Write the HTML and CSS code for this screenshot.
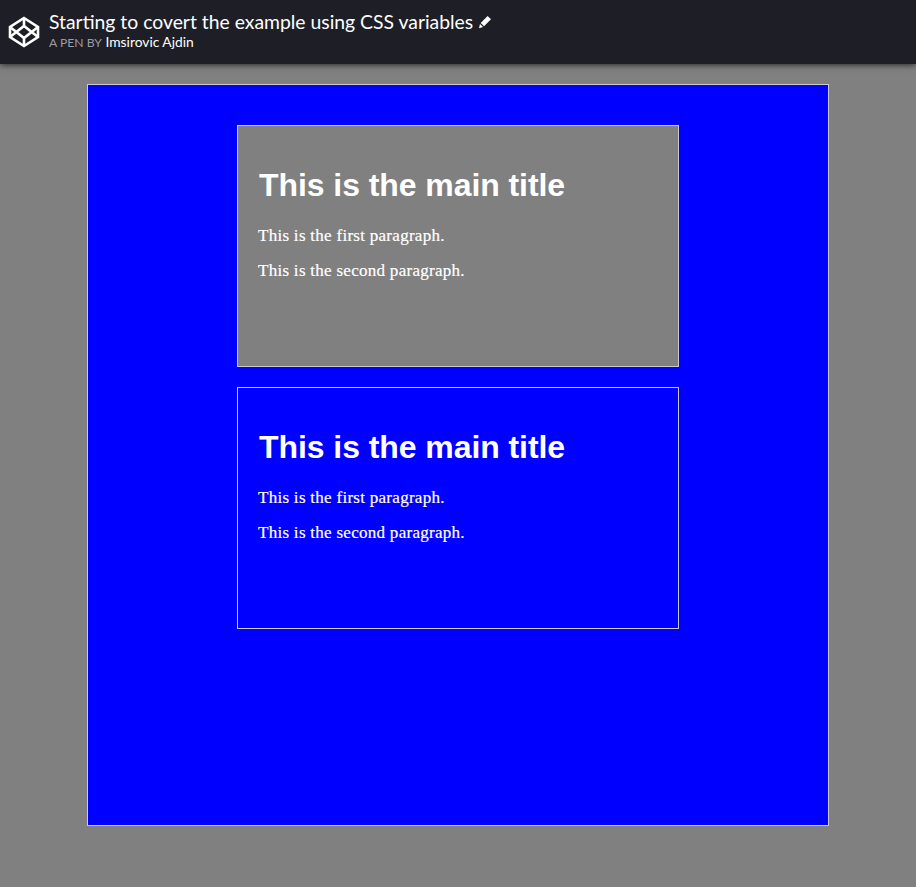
FILE: index.html
```
<!DOCTYPE html>
<html lang="en">
<head>
<meta charset="utf-8">
<title>Starting to covert the example using CSS variables</title>
<link rel="stylesheet" href="styles.css">
</head>
<body>
<header class="topbar">
  <svg class="logo" viewBox="0 0 32 32" width="32" height="32" fill="none" stroke="#fff" stroke-width="2.6" stroke-linejoin="miter">
    <path d="M16 2 30 11V21L16 30 2 21V11Z"/>
    <path d="M16 2V10M16 22V30M2 11 16 22 30 11M2 21 16 10 30 21"/>
  </svg>
  <div class="details">
    <h1 class="pen-title">Starting to covert the example using CSS variables
      <svg class="pencil" viewBox="0 0 14 14" width="14" height="14"><path fill="#fff" d="M9.6 1 13 4.2 6 11.2 2.7 8Z"/><path fill="#fff" d="M2 9 5.1 12 1 13.2Z"/></svg>
    </h1>
    <div class="byline"><span class="by-label">A PEN BY</span> <span class="author">Imsirovic Ajdin</span></div>
  </div>
</header>
<main class="outer">
  <section class="card card-gray">
    <h2 class="title">This is the main title</h2>
    <p class="para">This is the first paragraph.</p>
    <p class="para">This is the second paragraph.</p>
  </section>
  <section class="card card-blue">
    <h2 class="title">This is the main title</h2>
    <p class="para">This is the first paragraph.</p>
    <p class="para">This is the second paragraph.</p>
  </section>
</main>
</body>
</html>
```
FILE: styles.css
```
* { box-sizing: border-box; }
html, body { margin: 0; padding: 0; }
body { background: #808080; height: 887px; overflow: hidden; }
.topbar {
  height: 64px;
  background: #1e1f26;
  box-shadow: 0 1px 6px rgba(0,0,0,.7);
  display: flex;
  align-items: center;
  padding-left: 8px;
  gap: 9px;
  margin-bottom: 20px;
  position: relative;
}
.logo { flex: none; }
.details { font-family: Lato, sans-serif; color: #fff; margin-top: -4px; }
.pen-title { margin: 0; font-size: 19.35px; font-weight: 400; line-height: 24px; white-space: nowrap; }
.pencil { vertical-align: 0; }
.byline { font-size: 13.8px; line-height: 15px; }
.by-label { color: #9a9ca8; font-size: 12.2px; }
.author { color: #fff; }
.outer {
  width: 742px;
  height: 742px;
  margin: 0 auto;
  background: #00f;
  border: 1px solid #ccc;
  padding-top: 40px;
  display: flex;
  flex-direction: column;
  align-items: center;
  gap: 20px;
}
.card {
  width: 442px;
  height: 242px;
  border: 1px solid #ccc;
  color: #fff;
  padding: 41px 20px 0;
}
.card-gray { background: #808080; }
.card-blue { background: #00f; }
.title {
  font-family: "Liberation Sans", Arial, sans-serif;
  font-size: 32px;
  font-weight: 700;
  line-height: 37px;
  letter-spacing: -0.07px;
  margin: 0 0 23px 1px;
}
.para {
  font-family: "Liberation Serif", serif;
  font-size: 17px;
  letter-spacing: 0.28px;
  line-height: 18px;
  -webkit-text-stroke: 0.2px #fff;
  margin: 0 0 17px;
}
```
